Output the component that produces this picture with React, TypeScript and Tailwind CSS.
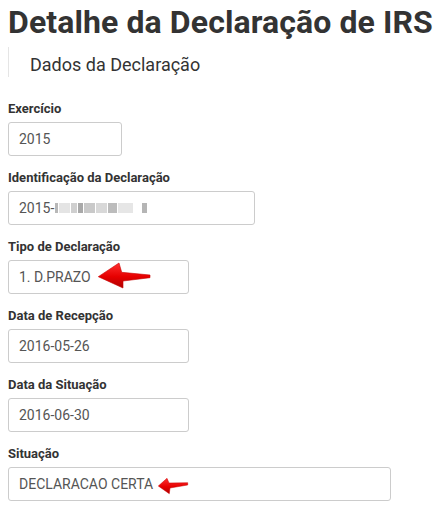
import React from 'react';

const BigArrow = () => (
  <svg width="56" height="30" viewBox="0 0 56 30" className="absolute left-[87px] top-[0px]">
    <defs>
      <linearGradient id="ga" x1="0" y1="0" x2="0" y2="1">
        <stop offset="0" stopColor="#ff3030" />
        <stop offset="0.55" stopColor="#e60000" />
        <stop offset="1" stopColor="#b00000" />
      </linearGradient>
    </defs>
    <path d="M2.3 15.7 L23 2 L25.7 11.3 L54 14 L54 16.7 L27 20 L27 27 Z" fill="url(#ga)" stroke="#c80000" strokeWidth="0.6" strokeLinejoin="round" />
  </svg>
);

const SmallArrow = () => (
  <svg width="34" height="20" viewBox="0 0 34 20" className="absolute left-[147px] top-[8px]">
    <defs>
      <linearGradient id="gb" x1="0" y1="0" x2="0" y2="1">
        <stop offset="0" stopColor="#ff3030" />
        <stop offset="0.55" stopColor="#e60000" />
        <stop offset="1" stopColor="#b00000" />
      </linearGradient>
    </defs>
    <path d="M2.3 10 L11 2.3 L13 7 L31.7 6.7 L31.7 9 L14 12 L13.3 17.7 Z" fill="url(#gb)" stroke="#c80000" strokeWidth="0.5" strokeLinejoin="round" />
  </svg>
);

// masked part of the declaration id
const Blurred = () => (
  <span className="inline-flex items-center gap-[1px] ml-[1px] align-middle blur-[0.6px]">
    <span className="inline-block w-[3px] h-[10px] bg-[#b8b8b8]" />
    <span className="inline-block w-[11px] h-[10px] bg-[#e4e4e4]" />
    <span className="inline-block w-[6px] h-[10px] bg-[#cfcfcf]" />
    <span className="inline-block w-[5px] h-[10px] bg-[#a9a9a9]" />
    <span className="inline-block w-[11px] h-[10px] bg-[#c9c9c9]" />
    <span className="inline-block w-[11px] h-[10px] bg-[#d8d8d8]" />
    <span className="inline-block w-[9px] h-[10px] bg-[#bcbcbc]" />
    <span className="inline-block w-[15px] h-[10px] bg-[#e6e6e6]" />
    <span className="inline-block w-[7px] h-[10px] bg-transparent" />
    <span className="inline-block w-[5px] h-[10px] bg-[#b5b5b5]" />
  </span>
);

interface FieldProps {
  label: string;
  width: string;
  children: React.ReactNode;
  extra?: React.ReactNode;
}

const Field = ({ label, width, children, extra }: FieldProps) => (
  <div className="mb-[13px]">
    <div className="text-[13px] leading-[18px] font-bold text-[#333] mb-[4px]">{label}</div>
    <div className={`relative h-[34px] border border-[#ccc] rounded-[3px] bg-white px-[10px] flex items-center text-[14px] leading-[20px] text-[#555] ${width}`}>
      {children}
      {extra}
    </div>
  </div>
);

export default function App() {
  return (
    <div className="min-h-screen bg-white px-2 font-['Roboto',sans-serif]">
      <h1 className="text-[32px] leading-[36px] font-bold text-[#333] pt-[4px] tracking-[0.1px] whitespace-nowrap">
        Detalhe da Declaração de IRS
      </h1>
      <div className="mt-[7px] h-[30px] border-l border-[#e5e5e5] pl-[21px] pt-[8px] text-[18px] leading-[20px] text-[#333]">
        Dados da Declaração
      </div>
      <div className="mt-[23px]">
        <Field label="Exercício" width="w-[114px]">2015</Field>
        <Field label="Identificação da Declaração" width="w-[247px]">
          <span>2015-</span>
          <Blurred />
        </Field>
        <Field label="Tipo de Declaração" width="w-[181px]" extra={<BigArrow />}>
          1. D.PRAZO
        </Field>
        <Field label="Data de Recepção" width="w-[181px]">2016-05-26</Field>
        <Field label="Data da Situação" width="w-[181px]">2016-06-30</Field>
        <Field label="Situação" width="w-[383px]" extra={<SmallArrow />}>
          DECLARACAO CERTA
        </Field>
      </div>
    </div>
  );
}
